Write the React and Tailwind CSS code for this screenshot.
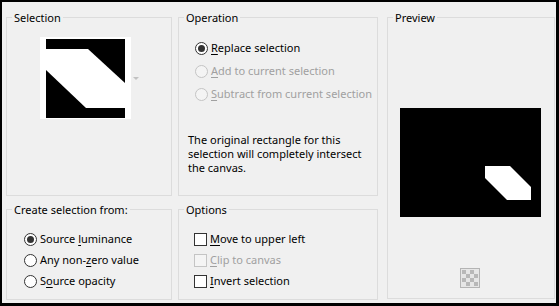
import React from "react";

const FONT = "font-['Segoe_UI','Noto_Sans',sans-serif]";

function GroupBox({ title, className, children }) {
  return (
    <div className={`flex flex-col border border-[#dcdcdc] ${className}`}>
      <span className="-mt-[8px] ml-[5px] self-start bg-[#f0f0f0] px-[2px] leading-[15px] text-black">
        {title}
      </span>
      {children}
    </div>
  );
}

function Mnemonic({ text, at }) {
  return (
    <span>
      {text.slice(0, at)}
      <span className="underline underline-offset-[2px]">{text[at]}</span>
      {text.slice(at + 1)}
    </span>
  );
}

function Radio({ checked, disabled }) {
  return (
    <span
      className={`flex h-[13px] w-[13px] shrink-0 items-center justify-center rounded-full border ${
        disabled ? "border-[#c4c4c4] bg-[#f4f4f4]" : "border-[#333333] bg-white"
      }`}
    >
      {checked && <span className="h-[7px] w-[7px] rounded-full bg-[#333333]" />}
    </span>
  );
}

function Check({ disabled }) {
  return (
    <span
      className={`h-[13px] w-[13px] shrink-0 border ${
        disabled ? "border-[#c4c4c4] bg-[#f4f4f4]" : "border-[#333333] bg-white"
      }`}
    />
  );
}

function Option({ control, label, at, disabled, h = "h-[21px]" }) {
  return (
    <div className={`flex items-center gap-[3px] ${h} ${disabled ? "text-[#a0a0a0]" : "text-black"}`}>
      {control}
      <Mnemonic text={label} at={at} />
    </div>
  );
}

export default function App() {
  return (
    <div
      className={`box-border h-[306px] w-[559px] overflow-hidden whitespace-nowrap border-t-2 border-l-2 border-r-[3px] border-b-[3px] border-black bg-[#f0f0f0] text-[11px] ${FONT}`}
    >
      <div className="flex pl-[4px] pt-[15px]">
        {/* left column */}
        <div className="flex w-[166px] flex-col">
          <GroupBox title="Selection" className="h-[179px]">
            <div className="ml-[33px] mt-[12px] flex items-start">
              <div className="h-[82px] w-[91px] bg-white pl-[6px] pt-[2px]">
                <svg width="79" height="79" viewBox="0 0 79 79" className="block">
                  <rect width="79" height="79" fill="#000" />
                  <polygon points="0,10 42,10 79,44 79,69 40,69 0,31" fill="#fff" />
                </svg>
              </div>
              <svg width="6" height="4" viewBox="0 0 6 4" className="ml-[2px] mt-[40px] block">
                <polygon points="0,0 6,0 3,3" fill="#c2c2c2" />
              </svg>
            </div>
          </GroupBox>
          <GroupBox title="Create selection from:" className="mt-[13px] h-[91px]">
            <div className="ml-[17px] mt-[12px] flex flex-col">
              <Option control={<Radio checked />} label="Source luminance" at={7} />
              <Option control={<Radio />} label="Any non-zero value" at={8} />
              <Option control={<Radio />} label="Source opacity" at={1} />
            </div>
          </GroupBox>
        </div>

        {/* middle column */}
        <div className="ml-[6px] flex w-[200px] flex-col">
          <GroupBox title="Operation" className="h-[179px]">
            <div className="ml-[16px] mt-[12px] flex flex-col">
              <Option control={<Radio checked />} label="Replace selection" at={0} h="h-[23px]" />
              <Option control={<Radio disabled />} label="Add to current selection" at={0} disabled h="h-[23px]" />
              <Option control={<Radio disabled />} label="Subtract from current selection" at={0} disabled h="h-[23px]" />
            </div>
            <p className="ml-[9px] mt-[27px] leading-[14px] text-black">
              The original rectangle for this
              <br />
              selection will completely intersect
              <br />
              the canvas.
            </p>
          </GroupBox>
          <GroupBox title="Options" className="mt-[13px] h-[91px]">
            <div className="ml-[15px] mt-[12px] flex flex-col">
              <Option control={<Check />} label="Move to upper left" at={0} />
              <Option control={<Check disabled />} label="Clip to canvas" at={0} disabled />
              <Option control={<Check />} label="Invert selection" at={0} />
            </div>
          </GroupBox>
        </div>

        {/* right column */}
        <GroupBox title="Preview" className="ml-[9px] h-[282px] w-[168px]">
          <svg width="141" height="109" viewBox="0 0 141 109" className="ml-[12px] mt-[83px] block">
            <rect width="141" height="109" fill="#000" />
            <polygon points="85,58 110,58 131,79 131,92 107,92 85,70" fill="#fff" />
          </svg>
          <svg width="20" height="20" viewBox="0 0 20 20" className="ml-[72px] mt-[51px] block">
            <rect x="0.5" y="0.5" width="19" height="19" fill="#e6e6e6" stroke="#b4b4b4" />
            {[0, 1, 2, 3].map((r) =>
              [0, 1, 2, 3].map((c) =>
                (r + c) % 2 === 0 ? (
                  <rect key={`${r}-${c}`} x={2 + c * 4} y={2 + r * 4} width="4" height="4" fill="#b8b8b8" />
                ) : null
              )
            )}
          </svg>
        </GroupBox>
      </div>
    </div>
  );
}
